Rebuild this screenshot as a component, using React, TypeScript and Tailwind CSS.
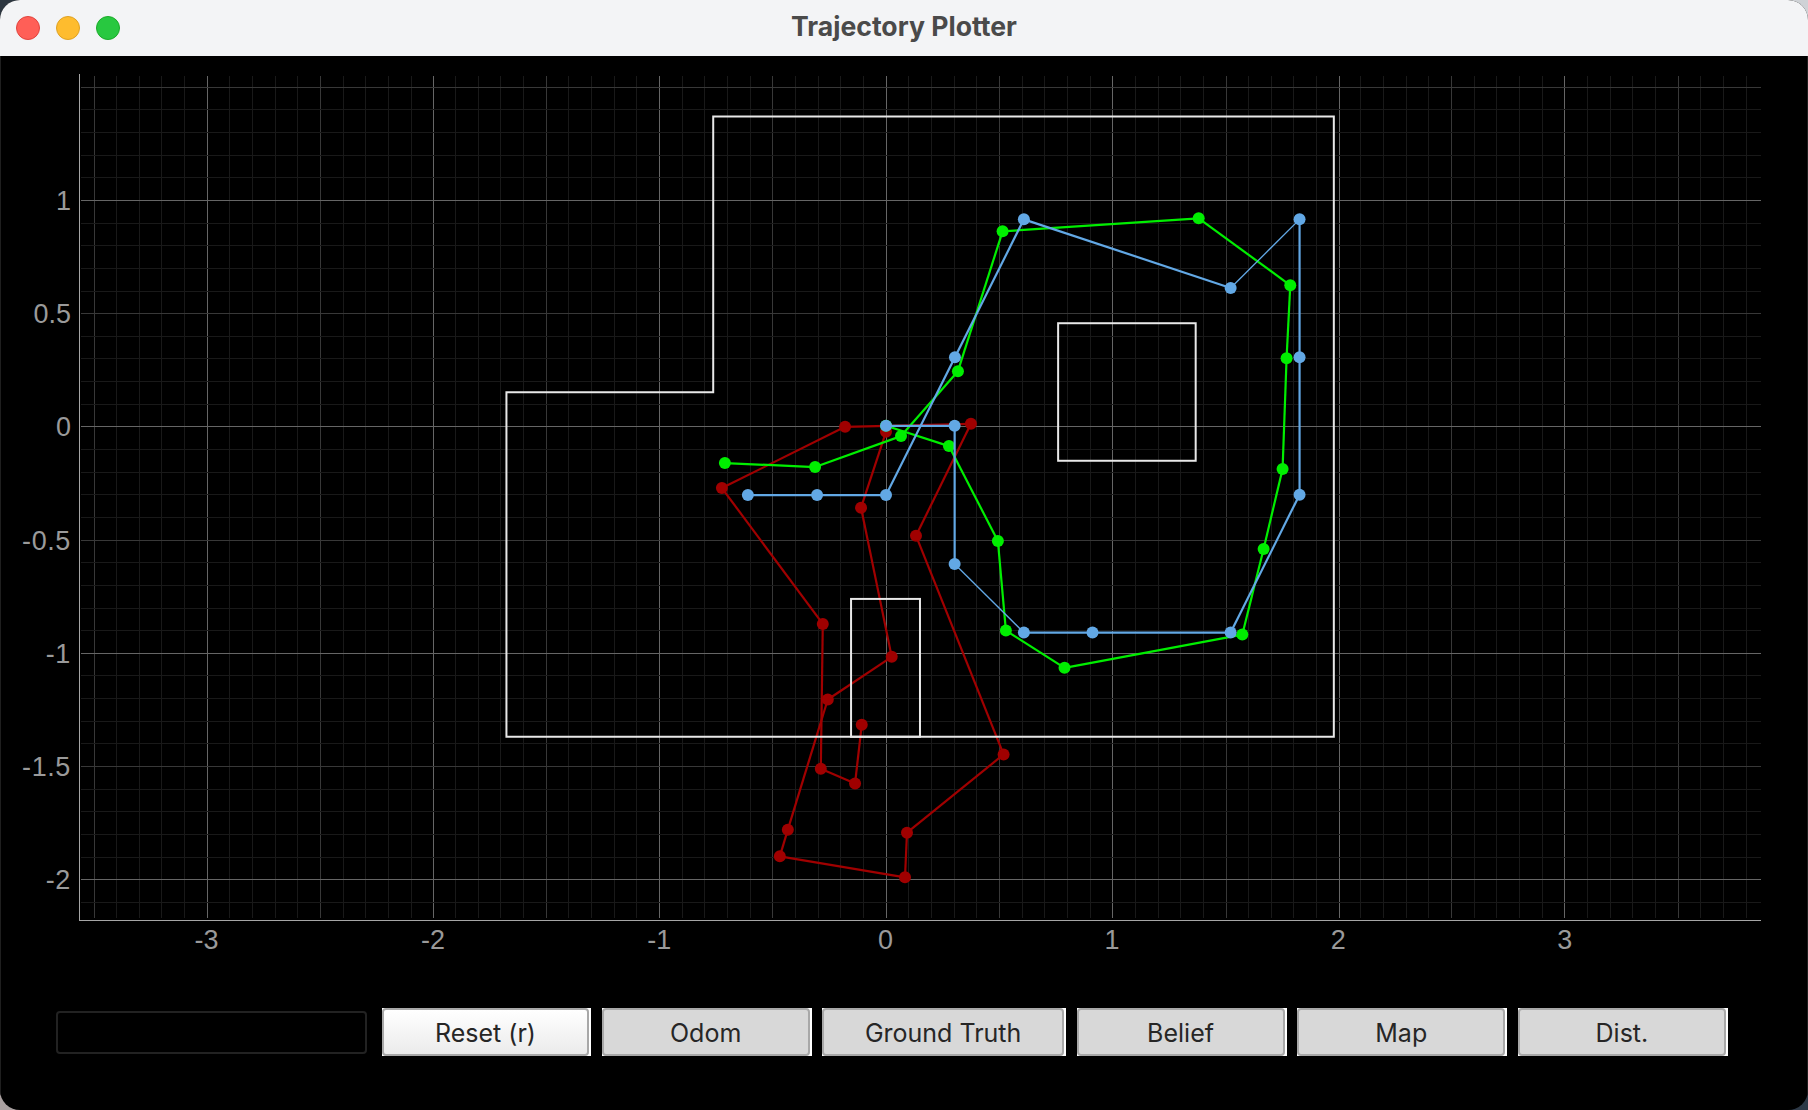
const X0 = 885.6;
const XU = 226.6;
const Y0 = 426.4;
const YU = 226.45;

const xTicks = Array.from({ length: 74 }, (_, i) => i - 35);
const yTicks = Array.from({ length: 37 }, (_, i) => 15 - i);

// grid weight by tenths: whole unit, half unit, everything else
function gridColor(k: number) {
  if (k % 10 === 0) return '#666666';
  if (k % 5 === 0) return '#383838';
  return '#191919';
}

type Pt = [number, number];

const blue: Pt[] = [
  [886, 425.7], [954.7, 425.7], [954.7, 564], [1024, 632.7], [1092.7, 632.7], [1231, 632.7], [1300, 494.7],
  [1300, 357], [1300, 219], [1231, 287.7], [1024, 219], [955, 357], [886, 495], [817, 495], [747.7, 495],
];
const green: Pt[] = [
  [886, 425.7], [949, 446], [998, 541], [1006, 630.7], [1064.7, 668], [1242.7, 634.7], [1264, 549], [1283, 469],
  [1287, 358], [1290.7, 285], [1199, 218], [1002.7, 231], [958, 371], [901, 436], [815, 467], [724.7, 463],
];
const red: Pt[] = [
  [886, 431.7], [861, 507.7], [891.7, 657], [827.7, 699.7], [787.7, 830], [779.7, 856.7], [905, 877.7], [907, 833],
  [1003.7, 754.7], [916, 535.7], [971, 423.7], [845, 426.7], [721.7, 488], [822.7, 624], [820.7, 769], [855, 783.7],
  [861.7, 725],
];

// a couple of the blue segments come out hairline in the original
const thinBlue = [2, 8];

function Trace({ points, color, thin = [] }: { points: Pt[]; color: string; thin?: number[] }) {
  return (
    <g>
      {points.slice(1).map((p, i) => (
        <line
          key={i}
          x1={points[i][0]}
          y1={points[i][1]}
          x2={p[0]}
          y2={p[1]}
          stroke={color}
          strokeWidth={thin.includes(i) ? 1.3 : 2.2}
        />
      ))}
      {points.map((p, i) => (
        <circle key={i} cx={p[0]} cy={p[1]} r={6} fill={color} />
      ))}
    </g>
  );
}

function Plot() {
  return (
    <svg className="block h-[936px] w-full" viewBox="0 56 1808 936">
      <g shapeRendering="crispEdges" strokeWidth={1}>
        {xTicks.map((k) => {
          const x = Math.round(X0 + (k / 10) * XU) + 0.5;
          return <line key={k} x1={x} x2={x} y1={76} y2={918} stroke={gridColor(k)} />;
        })}
        {yTicks.map((k) => {
          const y = Math.round(Y0 - (k / 10) * YU) + 0.5;
          return <line key={k} x1={80} x2={1762} y1={y} y2={y} stroke={gridColor(k)} />;
        })}
        <line x1={78.5} x2={78.5} y1={74} y2={921} stroke="#a6a6a6" />
        <line x1={78} x2={1762} y1={920.5} y2={920.5} stroke="#a6a6a6" />
      </g>

      <Trace points={red} color="#a00000" />
      <Trace points={green} color="#00ee00" />
      <Trace points={blue} color="#62a8e5" thin={thinBlue} />

      <g fill="none" stroke="#e8e8e8" strokeWidth={2}>
        <path d="M713 116H1334.3V737H506V392H713Z" />
        <rect x={1058.3} y={323} width={137.7} height={137.7} />
        <rect x={851} y={599} width={69} height={138} />
      </g>

      <g fill="#9a9a9a" fontFamily='"Liberation Sans", Arial, sans-serif' fontSize={27}>
        {[-3, -2, -1, 0, 1, 2, 3].map((v) => (
          <text key={v} x={X0 + v * XU} y={949} textAnchor="middle">
            {v}
          </text>
        ))}
        {[1, 0.5, 0, -0.5, -1, -1.5, -2].map((v) => (
          <text key={v} x={70} y={Y0 - v * YU + 10} textAnchor="end" letterSpacing={v < 0 ? 0.6 : 0}>
            {v}
          </text>
        ))}
      </g>
    </svg>
  );
}

function Btn({ label, active, width }: { label: string; active?: boolean; width: string }) {
  return (
    <div className={`h-12 ${width} bg-white pr-0.5`}>
      <button
        className={`flex h-full w-full items-center justify-center rounded-[4px] border-2 border-[#a8a8a8] pt-1 font-['Inter',sans-serif] text-[25px] text-[#262626] ${
          active ? 'bg-gradient-to-b from-white to-[#ebebeb]' : 'bg-[#d8d8d8]'
        }`}
      >
        {label}
      </button>
    </div>
  );
}

export default function App() {
  return (
    <div className="h-[1110px] w-[1808px] overflow-hidden bg-[conic-gradient(#cfd2d6_0_25%,#2d3947_25%_50%,#a89f9f_50%_75%,#2c3640_75%_100%)]">
      <div className="flex h-full flex-col overflow-hidden rounded-[20px] bg-black">
        {/* title bar */}
        <div className="relative flex h-14 shrink-0 items-center justify-center bg-[#f3f4f6]">
          <div className="absolute left-4 flex gap-4">
            <span className="h-6 w-6 rounded-full border border-[#e0443e] bg-[#ff5f57]" />
            <span className="h-6 w-6 rounded-full border border-[#dea123] bg-[#febc2e]" />
            <span className="h-6 w-6 rounded-full border border-[#1aab29] bg-[#28c840]" />
          </div>
          <span className="-mt-0.5 font-['Inter',sans-serif] text-[26.6px] font-bold text-[#4a4a4a]">
            Trajectory Plotter
          </span>
        </div>

        <div className="flex flex-1 flex-col border-x border-[#1f1f1f]">
          <Plot />

          {/* bottom controls */}
          <div className="flex items-center gap-[10.7px] pt-4 pl-[55px]">
            <input
              readOnly
              className="mr-[4.3px] h-[43px] w-[311px] rounded-[4px] border-2 border-[#222] bg-black"
            />
            <Btn label="Reset (r)" active width="w-[209px]" />
            <Btn label="Odom" width="w-[210px]" />
            <Btn label="Ground Truth" width="w-[243.5px]" />
            <Btn label="Belief" width="w-[210px]" />
            <Btn label="Map" width="w-[210px]" />
            <Btn label="Dist." width="w-[210px]" />
          </div>
        </div>
      </div>
    </div>
  );
}
